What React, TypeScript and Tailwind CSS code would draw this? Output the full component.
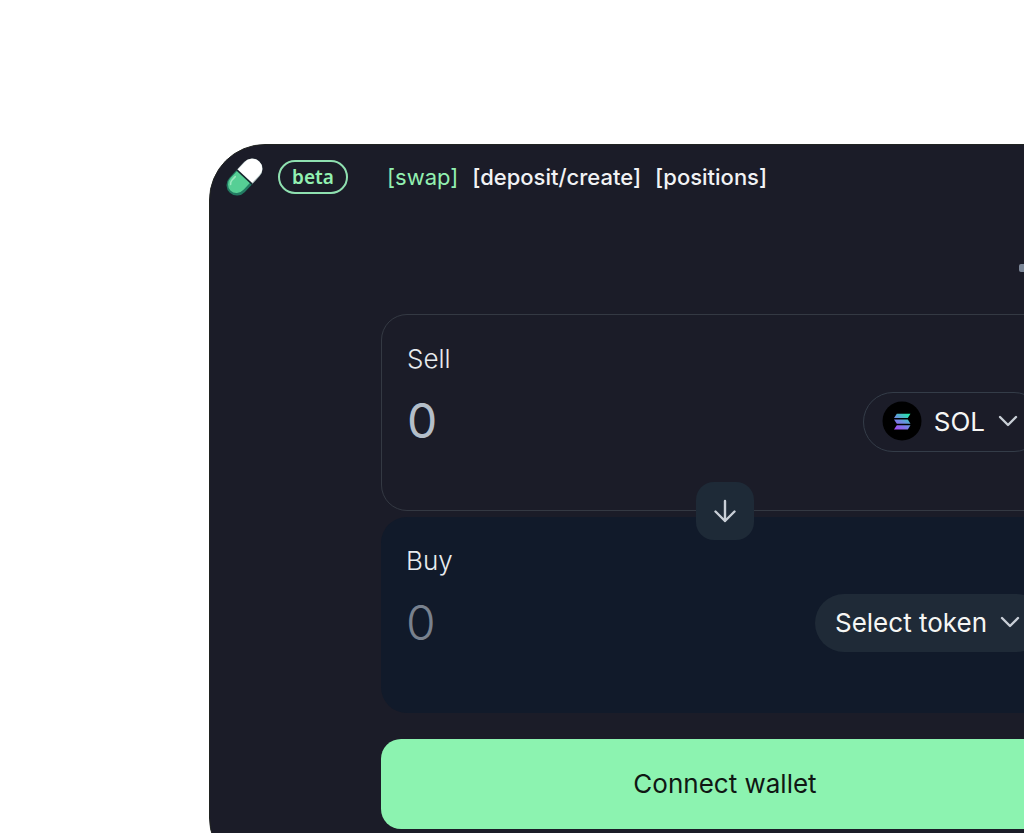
import { useState } from "react";

function PillLogo() {
  return (
    <svg viewBox="0 0 40 40" className="h-10 w-10" aria-hidden="true">
      <g transform="translate(0.500 0) rotate(43 20 20)">
        <path d="M9.500 20h21v11a10.500 10.500 0 0 1-21 0z" fill="#237a62" />
        <path d="M10.500 20h17.500v10a8.750 9.500 0 0 1-17.500 0z" fill="#56cf95" />
        <path d="M9.500 20V9a10.500 10.500 0 0 1 21 0v11z" fill="#b9cbca" />
        <path d="M10 20V9a10 10 0 0 1 18.500-5.500q1 2 1 5.500v11z" fill="#ffffff" />
        <path d="M9.500 20h21" stroke="#13252b" strokeWidth="1.500" />
        <path d="M13 26v5q0 2 2 4" stroke="#9be8bf" strokeWidth="1.500" strokeLinecap="round" fill="none" />
      </g>
    </svg>
  );
}

function SolanaLogo() {
  return (
    <svg viewBox="0 0 40 40" className="h-10 w-10" aria-hidden="true">
      <defs>
        <linearGradient id="sol" gradientUnits="userSpaceOnUse" x1="15" y1="29" x2="26" y2="12">
          <stop offset="0" stopColor="#a24bf5" />
          <stop offset="0.500" stopColor="#6a90e0" />
          <stop offset="1" stopColor="#1cf0a4" />
        </linearGradient>
      </defs>
      <circle cx="20" cy="20" r="19.500" fill="#000" />
      <g fill="url(#sol)">
        <path d="M14.800 12.800H28.500L25.800 17H12z" />
        <path d="M12 18.500H25.800L28.500 22.700H14.800z" />
        <path d="M14.800 24.200H28.500L25.800 28.400H12z" />
      </g>
    </svg>
  );
}

function Chevron() {
  return (
    <svg viewBox="0 0 20 20" className="h-5 w-5" fill="none" stroke="#c9cfd7" strokeWidth="2.400" strokeLinecap="round" strokeLinejoin="round" aria-hidden="true">
      <path d="M2 6l8 8 8-8" />
    </svg>
  );
}

export default function App() {
  const [sell, setSell] = useState("");
  const [buy, setBuy] = useState("");

  return (
    <div className="h-screen overflow-hidden bg-white pt-36 pl-[209px] font-['Inter',sans-serif]">
      <div className="min-w-[1032px] rounded-[56px] border border-[#202321] bg-[#1b1c28] pb-11">
        <header className="flex h-16 items-center pl-[14px]">
          <a href="#home" aria-label="Home">
            <PillLogo />
          </a>
          <span className="ml-[14px] flex h-[34px] w-[70px] items-center justify-center rounded-full border-2 border-[#8fe0b0] font-['Noto_Sans',sans-serif] text-[19px] font-semibold text-[#92f0b1]">
            beta
          </span>
          <nav className="ml-[39px] flex gap-[14px] text-[22px] font-medium text-[#f1f2f4]">
            <a href="#swap" className="font-normal text-[#92f0b1]">[swap]</a>
            <a href="#deposit">[deposit/create]</a>
            <a href="#positions">[positions]</a>
          </nav>
        </header>

        <main className="mx-auto w-[688px]">
          <div className="flex h-[105px] items-center justify-end pt-[13px] pr-10">
            <button aria-label="Settings" className="h-2 w-2.5 rounded-xs bg-[#7c8798]" />
          </div>

          <section className="flex h-[197px] justify-between rounded-[26px] border border-[#343943] pr-6 pl-[25px]">
            <div className="pt-[26px]">
              <label htmlFor="sell" className="block text-[26px] leading-9 font-light text-[#e8ebee]">Sell</label>
              <input id="sell" value={sell} onChange={(e) => setSell(e.target.value)} placeholder="0" className="mt-[15px] block h-14 w-80 bg-transparent text-5xl text-[#b4bec9] outline-none placeholder:text-[#b4bec9]" />
            </div>
            <button className="mt-[77px] flex h-[60px] items-center rounded-full border border-[#343c48] pr-[25px] pb-0.5 pl-[18px] text-[26px] text-[#f6f6f4]">
              <SolanaLogo />
              <span className="mr-[13px] ml-3">SOL</span>
              <Chevron />
            </button>
          </section>

          <div className="relative z-10 -mt-[29px] flex h-[58px] justify-center">
            <button aria-label="Switch tokens" className="flex w-[58px] items-center justify-center rounded-[18px] bg-[#1e2a37]">
              <svg viewBox="0 0 24 24" className="h-6 w-6" fill="none" stroke="#c9cfd7" strokeWidth="2.400" strokeLinecap="round" strokeLinejoin="round" aria-hidden="true">
                <path d="M12 2v20M2.500 12.500L12 22l9.500-9.500" />
              </svg>
            </button>
          </div>

          <section className="-mt-[23px] flex h-[196px] justify-between rounded-[26px] bg-[#111a2a] pr-6 pl-[25px]">
            <div className="pt-[26px]">
              <label htmlFor="buy" className="block text-[26px] leading-9 font-light text-[#e8ebee]">Buy</label>
              <input id="buy" value={buy} onChange={(e) => setBuy(e.target.value)} placeholder="0" className="mt-[15px] block h-14 w-80 bg-transparent text-5xl font-light text-[#78818e] outline-none placeholder:text-[#78818e]" />
            </div>
            <button className="mt-[77px] flex h-[58px] items-center rounded-full bg-[#1f2a37] pr-[25px] pb-0.5 pl-5 text-[26px] text-[#f6f6f4]">
              <span className="mr-[13px]">Select token</span>
              <Chevron />
            </button>
          </section>

          <button className="mt-[26px] h-[90px] w-full rounded-[20px] bg-[#8cf3b0] pb-0.5 text-[26px] text-[#101714]">
            Connect wallet
          </button>
        </main>
      </div>
    </div>
  );
}
